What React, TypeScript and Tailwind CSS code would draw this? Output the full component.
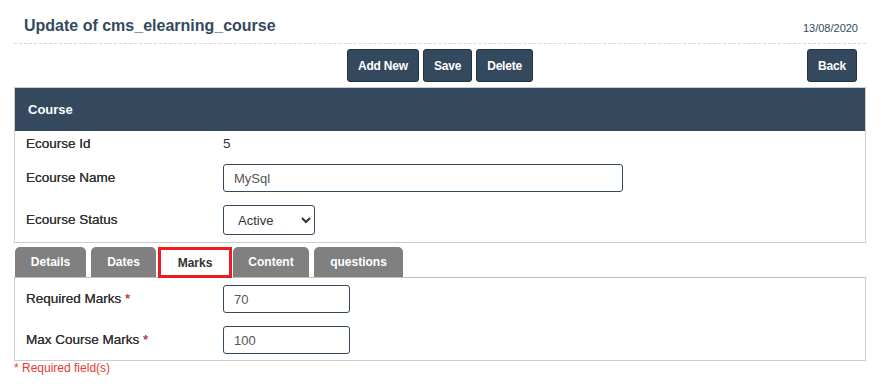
import { useState } from "react"

const navy = "bg-[#34495e]"

function ActionButton({ label }: { label: string }) {
    return (
        <button className={`${navy} h-[33px] px-[10px] rounded-[3px] border border-[#22313f] text-white text-[12px] font-bold tracking-[-0.2px]`}>
            {label}
        </button>
    )
}

function FieldRow({ label, required, children, className }: { label: string; required?: boolean; children: React.ReactNode; className?: string }) {
    return (
        <div className={`flex items-center ${className ?? ""}`}>
            <div className="w-[208px] pl-[11px] text-[13.5px] text-[#333] [text-shadow:0_0_0.4px_#333]">
                {label}
                {required && <span className="text-[#e53935]"> *</span>}
            </div>
            {children}
        </div>
    )
}

const tabs = ["Details", "Dates", "Marks", "Content", "questions"]

export default function App() {
    const [active, setActive] = useState("Marks")
    const [name, setName] = useState("MySql")
    const [status, setStatus] = useState("Active")
    const [required, setRequired] = useState("70")
    const [maxMarks, setMaxMarks] = useState("100")

    const inputCls = "h-[28px] rounded-[3px] border border-[#34495e] px-[10px] text-[13px] text-[#555] outline-none"

    return (
        <div className="w-[880px] h-[384px] bg-white px-[14px] font-['Liberation_Sans',Arial,sans-serif]">
            {/* header */}
            <div className="h-[44px] flex items-end justify-between border-b border-dashed border-[#d6d6d6] pb-[9px]">
                <h1 className="pl-[10px] text-[16px] font-bold text-[#34495e] leading-none">Update of cms_elearning_course</h1>
                <span className="pr-[8px] text-[11px] text-[#34495e] leading-none">13/08/2020</span>
            </div>

            {/* toolbar */}
            <div className="relative mt-[5px] h-[33px] flex justify-center gap-[4px]">
                <ActionButton label="Add New" />
                <ActionButton label="Save" />
                <ActionButton label="Delete" />
                <div className="absolute right-[9px] top-0">
                    <ActionButton label="Back" />
                </div>
            </div>

            {/* course panel */}
            <div className="mt-[5px] border border-[#cccccc]">
                <div className={`${navy} h-[43px] flex items-center pl-[13px] text-white text-[13px] font-bold`}>Course</div>
                <div className="pb-[7px]">
                    <FieldRow label="Ecourse Id" className="h-[26px]">
                        <span className="text-[13.5px] text-[#333]">5</span>
                    </FieldRow>
                    <FieldRow label="Ecourse Name" className="mt-[7px] h-[28px]">
                        <input className={`${inputCls} w-[400px]`} value={name} onChange={e => setName(e.target.value)} />
                    </FieldRow>
                    <FieldRow label="Ecourse Status" className="mt-[13px] h-[30px]">
                        <select
                            className="h-[30px] w-[92px] rounded-[3px] border border-[#34495e] pl-[10px] text-[13px] text-[#333] bg-white outline-none"
                            value={status}
                            onChange={e => setStatus(e.target.value)}
                        >
                            <option>Active</option>
                            <option>Inactive</option>
                        </select>
                    </FieldRow>
                </div>
            </div>

            {/* tabs */}
            <div className="mt-[4px] flex items-end h-[30px]">
                {tabs.map((t, i) => {
                    const isActive = t === active
                    const ml = i === 0 ? "ml-[1px]" : i === 1 ? "ml-[5px]" : i === 2 ? "ml-[2px]" : i === 3 ? "ml-[1px]" : "ml-[5px]"
                    const w = ["w-[71px]", "w-[65px]", "w-[74px]", "w-[76px]", "w-[89px]"][i]
                    return (
                        <button
                            key={t}
                            onClick={() => setActive(t)}
                            className={
                                isActive
                                    ? `${ml} ${w} relative z-10 h-[31px] -mb-[1px] bg-white border-[3px] border-[#ed1c24] text-[#333] text-[12px] font-bold`
                                    : `${ml} ${w} h-[30px] bg-[#808080] rounded-t-[5px] text-white text-[12px] font-bold`
                            }
                        >
                            {t}
                        </button>
                    )
                })}
            </div>

            {/* tab content */}
            <div className="border border-[#cccccc] border-t-[#bdbdbd] pt-[7px] pb-[6px]">
                <FieldRow label="Required Marks" required className="h-[28px]">
                    <input className={`${inputCls} w-[127px]`} value={required} onChange={e => setRequired(e.target.value)} />
                </FieldRow>
                <FieldRow label="Max Course Marks" required className="mt-[13px] h-[28px]">
                    <input className={`${inputCls} w-[127px]`} value={maxMarks} onChange={e => setMaxMarks(e.target.value)} />
                </FieldRow>
            </div>

            <div className="text-[12px] text-[#e53935] leading-[14px]">* Required field(s)</div>
        </div>
    )
}
